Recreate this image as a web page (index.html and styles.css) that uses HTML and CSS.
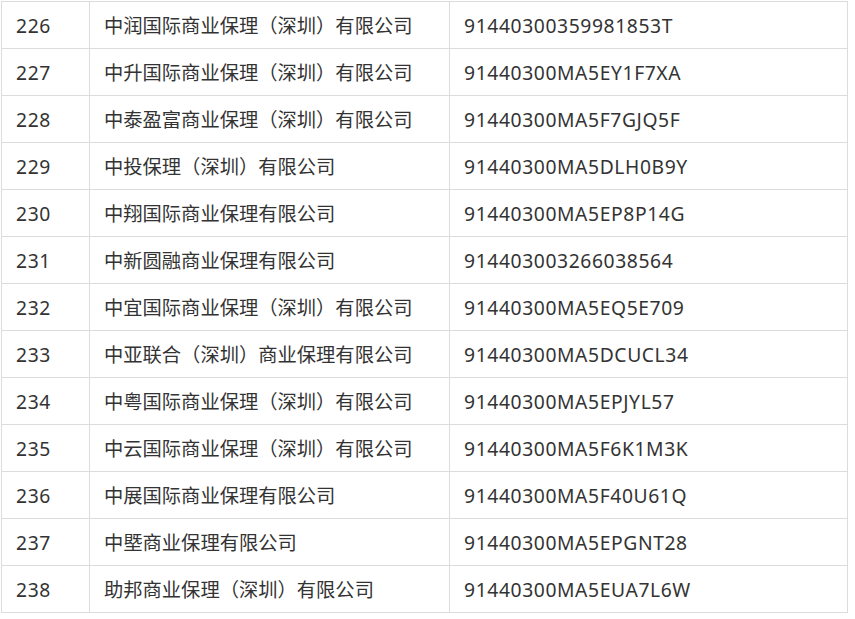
FILE: index.html
```html
<!DOCTYPE html>
<html lang="zh-CN">
<head>
  <meta charset="UTF-8">
  <meta name="viewport" content="width=device-width, initial-scale=1.0">
  <title>商业保理企业名单</title>
  <link rel="stylesheet" href="styles.css">
</head>
<body>
  <table class="CompanyTable">
    <colgroup>
      <col class="ColNo">
      <col class="ColName">
      <col class="ColCode">
    </colgroup>
    <tbody>
      <tr><td class="Num">226</td><td>中润国际商业保理（深圳）有限公司</td><td class="Num">91440300359981853T</td></tr>
      <tr><td class="Num">227</td><td>中升国际商业保理（深圳）有限公司</td><td class="Num">91440300MA5EY1F7XA</td></tr>
      <tr><td class="Num">228</td><td>中泰盈富商业保理（深圳）有限公司</td><td class="Num">91440300MA5F7GJQ5F</td></tr>
      <tr><td class="Num">229</td><td>中投保理（深圳）有限公司</td><td class="Num">91440300MA5DLH0B9Y</td></tr>
      <tr><td class="Num">230</td><td>中翔国际商业保理有限公司</td><td class="Num">91440300MA5EP8P14G</td></tr>
      <tr><td class="Num">231</td><td>中新圆融商业保理有限公司</td><td class="Num">914403003266038564</td></tr>
      <tr><td class="Num">232</td><td>中宜国际商业保理（深圳）有限公司</td><td class="Num">91440300MA5EQ5E709</td></tr>
      <tr><td class="Num">233</td><td>中亚联合（深圳）商业保理有限公司</td><td class="Num">91440300MA5DCUCL34</td></tr>
      <tr><td class="Num">234</td><td>中粤国际商业保理（深圳）有限公司</td><td class="Num">91440300MA5EPJYL57</td></tr>
      <tr><td class="Num">235</td><td>中云国际商业保理（深圳）有限公司</td><td class="Num">91440300MA5F6K1M3K</td></tr>
      <tr><td class="Num">236</td><td>中展国际商业保理有限公司</td><td class="Num">91440300MA5F40U61Q</td></tr>
      <tr><td class="Num">237</td><td>中塈商业保理有限公司</td><td class="Num">91440300MA5EPGNT28</td></tr>
      <tr><td class="Num">238</td><td>助邦商业保理（深圳）有限公司</td><td class="Num">91440300MA5EUA7L6W</td></tr>
    </tbody>
  </table>
</body>
</html>
```

FILE: styles.css
```css
* {
  margin: 0;
  padding: 0;
  box-sizing: border-box;
}

body {
  font-family: 'Noto Sans', 'Noto Sans CJK SC', sans-serif;
  background: #fff;
  color: #333;
  padding: 1px;
}

/* Table */
.CompanyTable {
  width: 846px;
  border-collapse: collapse;
  table-layout: fixed;
  font-size: 19.3px;
}

.ColNo {
  width: 88px;
}

.ColName {
  width: 360px;
}

.ColCode {
  width: 398px;
}

.CompanyTable td {
  height: 47px;
  padding: 2px 14px 0;
  border: 1px solid #dcdcdc;
  vertical-align: middle;
  white-space: nowrap;
  line-height: 1;
}

.CompanyTable td.Num {
  letter-spacing: 0.6px;
}
```
